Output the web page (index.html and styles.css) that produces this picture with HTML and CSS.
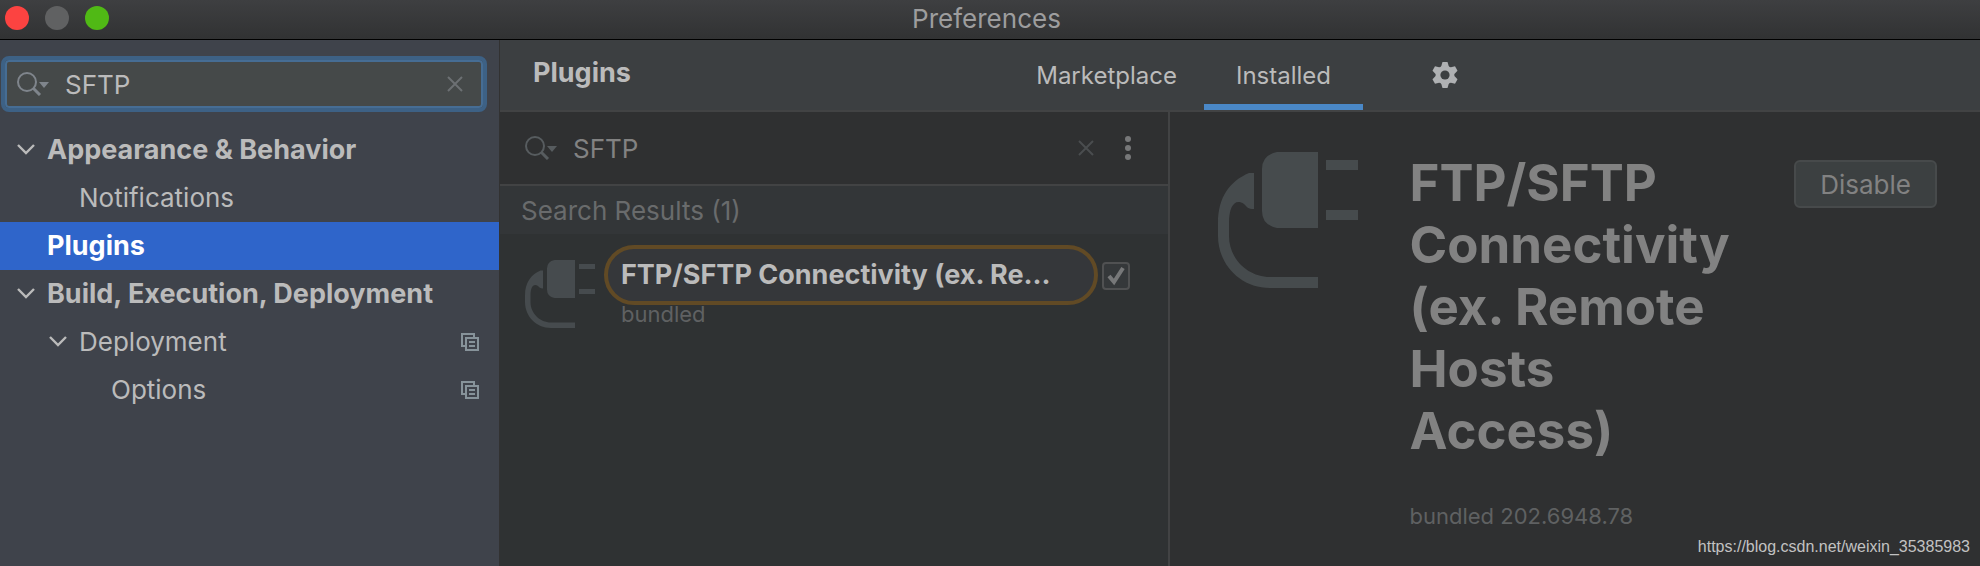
FILE: index.html
```html
<!DOCTYPE html>
<html lang="en">
<head>
<meta charset="utf-8">
<meta name="viewport" content="width=device-width, initial-scale=1">
<title>Preferences</title>
<link rel="stylesheet" href="styles.css">
</head>
<body>
<svg class="defs" aria-hidden="true">
  <symbol id="search" viewBox="0 0 32 24">
    <circle cx="10" cy="10" r="9" fill="none" stroke="currentColor" stroke-width="2"/>
    <path d="M16 16l7 7" stroke="currentColor" stroke-width="3" fill="none"/>
    <path d="M22 10h10l-5 6z" fill="currentColor"/>
  </symbol>
  <symbol id="cross" viewBox="0 0 16 16">
    <path d="M1 1l14 14M15 1L1 15" stroke="currentColor" stroke-width="2" fill="none"/>
  </symbol>
  <symbol id="chevron" viewBox="0 0 18 12">
    <path d="M1 1l8 8 8-8" stroke="currentColor" stroke-width="2.4" fill="none"/>
  </symbol>
  <symbol id="copy" viewBox="0 0 18 18">
    <path d="M4 13H1V1h12v3" fill="none" stroke="currentColor" stroke-width="2"/>
    <path d="M5 5h12v12H5zM8 9h6M8 13h6" fill="none" stroke="currentColor" stroke-width="2"/>
  </symbol>
  <symbol id="plug" viewBox="0 0 140 136">
    <path d="M59 0H100V76H59Q44 73 44 59V17Q44 3 59 0zM108 8h32v10h-32zM108 58h32v10h-32z" fill="currentColor"/>
    <path d="M36 21V57C30 57 29 55 26 52C17 46 11 54 11 71V84C11 107 30 125 52 125H100V136H52C22 136 0 112 0 84V71C0 45 12 29 31 21z" fill="currentColor"/>
  </symbol>
</svg>
<div class="window">
  <header class="titlebar">
    <div class="lights"><span class="light close"></span><span class="light minimize"></span><span class="light expand"></span></div>
    <h1 class="window-title">Preferences</h1>
  </header>
  <div class="content">
    <aside class="sidebar">
      <div class="search search-focused">
        <svg class="search-icon" aria-hidden="true"><use href="#search"/></svg>
        <input class="search-input" type="text" value="SFTP" aria-label="Search settings">
        <button class="icon-button" aria-label="Clear search"><svg class="cross"><use href="#cross"/></svg></button>
      </div>
      <nav class="tree" aria-label="Settings">
        <a class="node group" href="#"><svg class="chevron"><use href="#chevron"/></svg>Appearance &amp; Behavior</a>
        <a class="node level-2" href="#">Notifications</a>
        <a class="node level-1 group selected" href="#" aria-current="page">Plugins</a>
        <a class="node group" href="#"><svg class="chevron"><use href="#chevron"/></svg>Build, Execution, Deployment</a>
        <a class="node nested" href="#"><svg class="chevron"><use href="#chevron"/></svg>Deployment<svg class="copy"><use href="#copy"/></svg></a>
        <a class="node level-3" href="#">Options<svg class="copy"><use href="#copy"/></svg></a>
      </nav>
    </aside>
    <main class="main">
      <header class="main-header">
        <h2 class="page-title">Plugins</h2>
        <div class="tabs" role="tablist">
          <button class="tab" role="tab" aria-selected="false">Marketplace</button>
          <button class="tab active" role="tab" aria-selected="true">Installed</button>
        </div>
        <button class="icon-button" aria-label="Plugin settings">
          <svg class="gear" viewBox="0 0 26 26"><g fill="currentColor"><path id="tooth" d="M10.500 0h5l1.500 5v16l-1.500 5h-5L9 21V5z"/><use href="#tooth" transform="rotate(60 13 13)"/><use href="#tooth" transform="rotate(120 13 13)"/><circle cx="13" cy="13" r="9.400"/></g><circle cx="13" cy="13" r="4.600" fill="#3c3f41"/></svg>
        </button>
      </header>
      <div class="panes">
        <section class="list-pane">
          <div class="search search-plain">
            <svg class="search-icon" aria-hidden="true"><use href="#search"/></svg>
            <input class="search-input" type="text" value="SFTP" aria-label="Search plugins">
            <button class="icon-button" aria-label="Clear plugin search"><svg class="cross"><use href="#cross"/></svg></button>
            <button class="icon-button dots" aria-label="More options"><svg class="more" viewBox="0 0 6 24" fill="currentColor"><circle cx="3" cy="3" r="3"/><circle cx="3" cy="12" r="3"/><circle cx="3" cy="21" r="3"/></svg></button>
          </div>
          <h3 class="results-title">Search Results (1)</h3>
          <article class="plugin">
            <svg class="plugin-icon" aria-hidden="true"><use href="#plug"/></svg>
            <div class="plugin-info">
              <label class="plugin-name" for="enabled">FTP/SFTP Connectivity (ex. Re...</label>
              <span class="plugin-meta">bundled</span>
            </div>
            <span class="check">
              <input class="check-input" type="checkbox" id="enabled" checked>
              <svg class="check-mark" viewBox="0 0 28 28" aria-hidden="true"><path d="M7 14l5 6 9-14" fill="none" stroke="currentColor" stroke-width="4"/></svg>
            </span>
          </article>
        </section>
        <section class="details">
          <svg class="details-icon" aria-hidden="true"><use href="#plug"/></svg>
          <div class="details-info">
            <h2 class="details-title">FTP/SFTP Connectivity (ex. Remote Hosts Access)</h2>
            <p class="details-version">bundled 202.6948.78</p>
          </div>
          <button class="disable">Disable</button>
        </section>
      </div>
    </main>
  </div>
  <div class="watermark">https://blog.csdn.net/weixin_35385983</div>
</div>
</body>
</html>
```
FILE: styles.css
```css
* { box-sizing: border-box; }
body {
  margin: 0;
  background: #2f3031;
  color: #bbbbbb;
  font: 26px/32px Inter, "Liberation Sans", sans-serif;
}
h1, h2, h3, p { margin: 0; }
button, input { font: inherit; color: inherit; }
svg { flex: none; display: block; }
.defs { position: absolute; width: 0; height: 0; }
.window {
  position: relative;
  display: flex;
  flex-direction: column;
  min-height: 100vh;
}
.titlebar {
  display: grid;
  grid-template-columns: 1fr auto 1fr;
  align-items: center;
  height: 40px;
  padding: 0 12px 0 5px;
  background: linear-gradient(#3e3f41, #313233);
  border-bottom: 1px solid #000;
}
.lights { display: flex; gap: 16px; padding-bottom: 3px; }
.light { width: 24px; height: 24px; border-radius: 50%; }
.close { background: #fc4341; }
.minimize { background: #606162; }
.expand { background: #50b915; }
.window-title { padding-bottom: 2px; font-size: 26px; font-weight: 400; color: #9d9d9e; }
.content { display: flex; flex: 1; }
.sidebar {
  flex: none;
  width: 500px;
  padding-top: 16px;
  background: #3f434b;
  border-right: 1px solid #323232;
}
.search { display: flex; align-items: center; }
.search-focused {
  height: 56px;
  margin: 0 12px 14px 1px;
  padding: 0 20px 0 10px;
  background: #454949;
  border: 4px solid #3d6185;
  border-radius: 8px;
  box-shadow: inset 0 0 0 2px #466d94;
}
.search-icon { width: 32px; height: 24px; color: #7f858c; }
.search-focused .search-icon { margin-left: 2px; }
.search-input {
  flex: 1;
  min-width: 0;
  padding: 2px 0 0;
  margin-left: 16px;
  border: 0;
  outline: 0;
  background: none;
}
.icon-button {
  display: flex;
  padding: 0;
  border: 0;
  background: none;
}
.cross { width: 16px; height: 16px; color: #6c7073; }
.node {
  display: flex;
  align-items: center;
  height: 48px;
  padding-left: 17px;
  padding-right: 20px;
  color: inherit;
  text-decoration: none;
}
.group { font-size: 27px; font-weight: 700; }
.nested { padding-left: 49px; }
.level-1 { padding-left: 47px; }
.level-2 { padding-left: 79px; }
.level-3 { padding-left: 111px; }
.selected { background: #2f65ca; color: #fff; }
.chevron { width: 18px; height: 12px; margin-right: 12px; }
.copy { width: 18px; height: 18px; margin-left: auto; color: #87939a; }
.main { flex: 1; min-width: 0; display: flex; flex-direction: column; }
.main-header {
  display: flex;
  align-items: center;
  height: 72px;
  padding-left: 33px;
  background: #3c3f41;
  border-bottom: 2px solid #424344;
}
.page-title { font-size: 27px; font-weight: 700; padding-bottom: 4px; }
.tabs { display: flex; align-self: stretch; margin-left: auto; }
.tab {
  padding: 8px 27px 0;
  border: 0;
  border-bottom: 6px solid transparent;
  background: none;
  font-size: 24px;
}
.active { padding: 8px 32px 0; border-bottom-color: #4a88c7; }
.main-header .icon-button { margin: 0 522px 0 69px; }
.gear { width: 26px; height: 26px; color: #afb1b3; }
.panes {
  display: grid;
  grid-template-columns: minmax(0, 19fr) minmax(0, 23fr);
  flex: 1;
}
.list-pane {
  background: #2f3233;
  border-right: 2px solid #424344;
}
.search-plain {
  height: 74px;
  padding: 0 37px 0 25px;
  background: #2f3031;
  border-bottom: 2px solid #424344;
  color: #828282;
}
.search-plain .search-icon { color: #575c5f; }
.search-plain .cross { color: #4a4d4f; }
.dots { margin-left: 31px; }
.more { width: 6px; height: 24px; color: #777879; }
.results-title {
  padding: 9px 21px 7px;
  background: #333638;
  color: #696b6c;
  font-size: 26px;
  font-weight: 400;
}
.plugin { display: flex; padding: 11px 38px 0 25px; }
.plugin-icon { width: 70px; height: 68px; margin-top: 15px; color: #464b4e; }
.plugin-info { flex: 1; min-width: 0; margin-left: 9px; }
.plugin-name {
  display: block;
  height: 60px;
  padding: 10px 13px;
  border: 4px solid #614a25;
  border-radius: 30px;
  background: #35373a;
  font-size: 27px;
  font-weight: 700;
  white-space: nowrap;
}
.plugin-meta {
  display: block;
  padding-left: 17px;
  margin-top: -7px;
  color: #5f6162;
  font-size: 22px;
}
.check { position: relative; width: 28px; height: 28px; margin: 17px 0 0 4px; }
.check-input {
  appearance: none;
  width: 28px;
  height: 28px;
  margin: 0;
  display: block;
  border: 2px solid #505152;
  border-radius: 4px;
  background: #35383a;
}
.check-mark { position: absolute; inset: 0; color: #777879; pointer-events: none; }
.details {
  display: flex;
  align-items: flex-start;
  padding: 40px 43px 32px 48px;
}
.details-icon { width: 140px; height: 136px; color: #464b4d; }
.details-info { flex: 1; min-width: 0; margin: 0 40px 0 52px; }
.details-title { color: #828282; font-size: 51px; line-height: 62px; font-weight: 700; }
.details-version { margin-top: 38px; color: #5f6162; font-size: 22px; }
.disable {
  height: 48px;
  padding: 2px 24px 0;
  margin-top: 8px;
  border: 2px solid #474a4b;
  border-radius: 6px;
  background: #3c4041;
  color: #828282;
}
.watermark {
  position: absolute;
  right: 10px;
  bottom: 7px;
  color: #c2c2c2;
  font: 16px/24px "Liberation Sans", sans-serif;
}
```
